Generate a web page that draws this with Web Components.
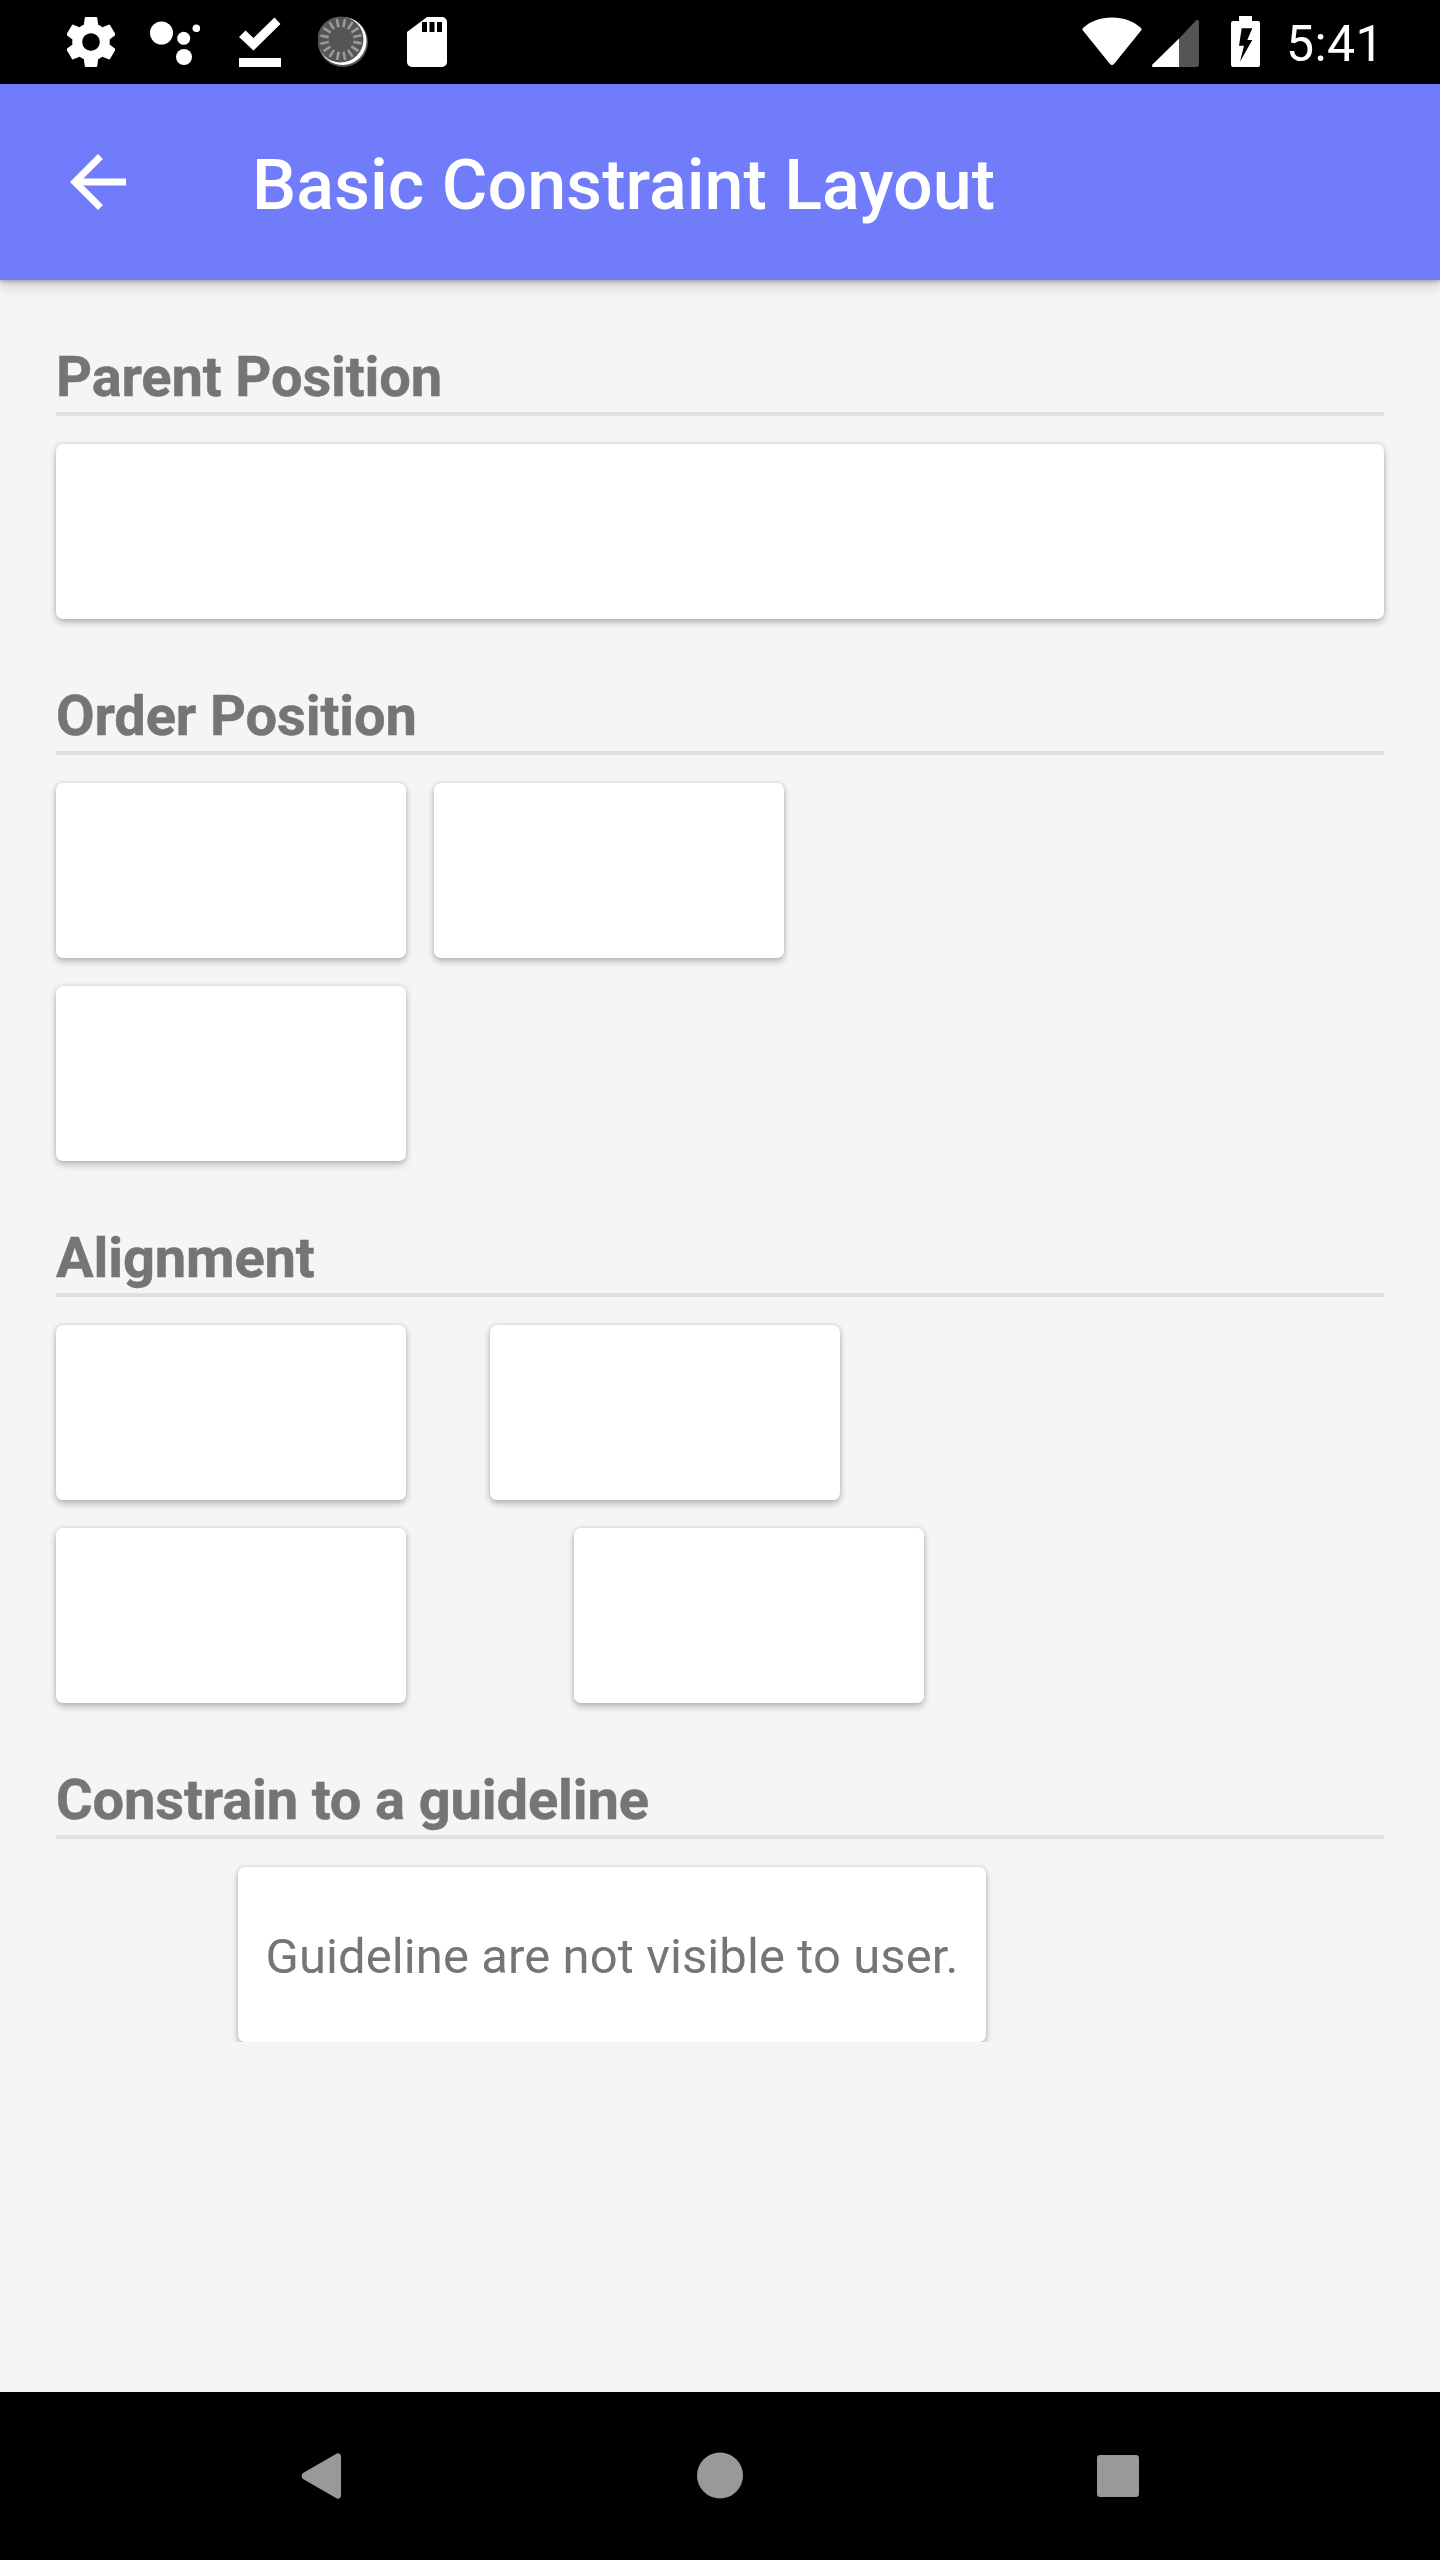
<!DOCTYPE html>
<html><head><meta charset="utf-8"><style>
html,body{margin:0;padding:0;background:#000}
body{width:1440px;height:2560px;overflow:hidden;font-family:Roboto,sans-serif}
</style></head><body>
<demo-app>
  <status-bar slot="status"></status-bar>
  <app-toolbar slot="toolbar">Basic Constraint Layout</app-toolbar>
  <layout-section heading="Parent Position">
    <card-row><demo-card wide></demo-card></card-row>
  </layout-section>
  <layout-section heading="Order Position">
    <card-row><demo-card></demo-card><demo-card style="margin-left:28px"></demo-card></card-row>
    <card-row><demo-card></demo-card></card-row>
  </layout-section>
  <layout-section heading="Alignment">
    <card-row><demo-card></demo-card><demo-card style="margin-left:84px"></demo-card></card-row>
    <card-row><demo-card></demo-card><demo-card style="margin-left:168px"></demo-card></card-row>
  </layout-section>
  <layout-section heading="Constrain to a guideline">
    <card-row><demo-card guide style="margin-left:182px">Guideline are not visible to user.</demo-card></card-row>
  </layout-section>
  <nav-bar slot="nav"></nav-bar>
</demo-app>
<script>
function def(name, html){
  customElements.define(name, class extends HTMLElement{
    constructor(){super();this.attachShadow({mode:'open'}).innerHTML=html;}
  });
}
def('demo-app',`<style>
:host{display:flex;flex-direction:column;width:1440px;height:2560px;background:#f5f5f5}
main{flex:1;display:flex;flex-direction:column;padding:0 56px;min-height:0;overflow:hidden}
</style><slot name="status"></slot><slot name="toolbar"></slot><main><slot></slot></main><slot name="nav"></slot>`);

const ticks=[...Array(16)].map((_,i)=>{const a=(i*22.5+11)*Math.PI/180;const c=[341,39.5];
 return `<line x1="${(c[0]+12.5*Math.cos(a)).toFixed(1)}" y1="${(c[1]+12.5*Math.sin(a)).toFixed(1)}" x2="${(c[0]+21*Math.cos(a)).toFixed(1)}" y2="${(c[1]+21*Math.sin(a)).toFixed(1)}"/>`}).join('');
def('status-bar',`<style>
:host{display:flex;flex:none;height:84px;background:#000;color:#fff;align-items:stretch;padding-left:67px;padding-right:63px;position:relative}
svg{display:block;height:84px;flex:none;fill:#fff}
.time{font:400 50px/88px Roboto,sans-serif;letter-spacing:.4px;margin-left:26px;width:91px;white-space:nowrap}
.sp{flex:1}
</style>
<svg width="48" viewBox="67 0 48 84"><path transform="translate(91 42) scale(2.5) translate(-12 -12)" d="M19.43 12.98c.04-.32.07-.64.07-.98s-.03-.66-.07-.98l2.11-1.65c.19-.15.24-.42.12-.64l-2-3.46c-.12-.22-.39-.3-.61-.22l-2.49 1c-.52-.4-1.08-.73-1.69-.98l-.38-2.65C14.46 2.18 14.25 2 14 2h-4c-.25 0-.46.18-.49.42l-.38 2.65c-.61.25-1.17.59-1.69.98l-2.49-1c-.23-.09-.49 0-.61.22l-2 3.46c-.13.22-.07.49.12.64l2.11 1.65c-.04.32-.07.65-.07.98s.03.66.07.98l-2.11 1.65c-.19.15-.24.42-.12.64l2 3.46c.12.22.39.3.61.22l2.49-1c.52.4 1.08.73 1.69.98l.38 2.65c.03.24.24.42.49.42h4c.25 0 .46-.18.49-.42l.38-2.65c.61-.25 1.17-.59 1.69-.98l2.49 1c.23.09.49 0 .61-.22l2-3.46c.12-.22.07-.49-.12-.64l-2.11-1.65zM12 15.5c-1.93 0-3.5-1.57-3.5-3.5s1.57-3.5 3.5-3.5 3.5 1.57 3.5 3.5-1.57 3.5-3.5 3.5z"/></svg>
<svg width="50" viewBox="150 0 50 84" style="margin-left:35px"><circle cx="161.5" cy="33" r="11.5"/><circle cx="183.7" cy="38.3" r="6.5"/><circle cx="196.3" cy="28.3" r="3.8"/><circle cx="184" cy="57" r="8"/></svg>
<svg width="42" viewBox="239 0 42 84" style="margin-left:39px"><path d="M239 58h42v9h-42zM239 37l6.500-6.500 8 7.500L274.500 17.500 280.500 24 253.500 50.500z"/></svg>
<svg width="50" viewBox="318 0 50 84" style="margin-left:37px"><circle cx="343" cy="42" r="25" fill="#555"/><circle cx="342.500" cy="41" r="24" fill="#fff"/><circle cx="340.500" cy="39.500" r="23" fill="#555"/><g stroke="#9a9a9a" stroke-width="2.600" fill="none">${ticks}</g></svg>
<svg width="40" viewBox="407 0 40 84" style="margin-left:39px"><path fill-rule="evenodd" d="M427 17h15a5 5 0 0 1 5 5v40a5 5 0 0 1-5 5h-30a5 5 0 0 1-5-5V32zM422 22v10h5V22zM429.500 22v10h5V22zM437 22v10h5V22z"/></svg>
<span class="sp"></span>
<svg width="60" viewBox="1082 0 60 84"><path d="M1112 17.500c11.500 0 22 4 29 10.500a1.800 1.800 0 0 1 .1 2.500L1114 64a2.600 2.600 0 0 1-4 0L1082.900 30.500a1.800 1.800 0 0 1 .1-2.500c7-6.500 17.500-10.500 29-10.500z"/></svg>
<svg width="47" viewBox="1152 0 47 84" style="margin-left:10px"><path fill="#555" d="M1179 38.500 1196 20.500c1.200-1 3-.3 3 1.300V64a3 3 0 0 1-3 3h-17z"/><path d="M1179 38.500V67h-25.500c-1.500 0-2-1.500-1-2.500z"/></svg>
<svg width="29" viewBox="1231 0 29 84" style="margin-left:32px"><path fill-rule="evenodd" d="M1239 16h13v5h6a2 2 0 0 1 2 2v42a2 2 0 0 1-2 2h-25a2 2 0 0 1-2-2V23a2 2 0 0 1 2-2h6zM1241.700 28.300h10.600l-5 11.700h5l-12.300 21.700 4-16h-5z"/></svg>
<span class="time">5:41</span>`);

def('app-toolbar',`<style>
:host{display:flex;flex:none;height:196px;background:#717cfb;align-items:center;color:#fff;box-shadow:0 2px 3px rgba(0,0,0,.18),0 5px 12px rgba(0,0,0,.2);position:relative;z-index:1;box-sizing:border-box;padding-left:56px}
svg{display:block;width:84px;height:84px;flex:none;fill:#fff}
span{font:500 70px/84px Roboto,sans-serif;margin-left:112px;padding-top:6px;white-space:nowrap}
</style><svg viewBox="0 0 24 24"><path d="M20 11H7.830l5.590-5.590L12 4l-8 8 8 8 1.410-1.410L7.830 13H20v-2z"/></svg><span><slot></slot></span>`);

customElements.define('layout-section',class extends HTMLElement{
 constructor(){super();this.attachShadow({mode:'open'}).innerHTML=`<style>
:host{display:block}
h2{margin:0;font:700 56px/66px Roboto,sans-serif;letter-spacing:-.13px;color:#757575;white-space:nowrap;padding:64px 0 2px;border-bottom:4px solid #e0e0e0;-webkit-text-stroke:.5px #757575}
.body{display:flex;flex-direction:column;padding-top:28px;gap:28px}
</style><h2></h2><div class="body"><slot></slot></div>`;}
 connectedCallback(){this.shadowRoot.querySelector('h2').textContent=this.getAttribute('heading');}
});
def('card-row',`<style>:host{display:flex;align-items:flex-start}</style><slot></slot>`);
def('demo-card',`<style>
:host{display:flex;align-items:center;justify-content:center;flex:none;width:350px;height:175px;box-sizing:border-box;background:#fff;border-radius:7px;box-shadow:0 4px 7px rgba(0,0,0,.22),0 0 5px rgba(0,0,0,.14);font:400 49px/1 Roboto,sans-serif;letter-spacing:.09px;color:#757575;white-space:nowrap}
:host([wide]){width:1328px}
:host([guide]){width:748px;padding-top:4px;clip-path:inset(-12px -12px 0 -12px)}
</style><slot></slot>`);
def('nav-bar',`<style>
:host{display:block;flex:none;height:168px;background:#000}
svg{display:block;width:1440px;height:168px}
</style><svg viewBox="0 2392 1440 168" fill="#999"><path d="M341 2456v40a3 3 0 0 1-5 2L303 2479a4 4 0 0 1 0-6L336 2454a3 3 0 0 1 5 2z"/><circle cx="720" cy="2475.500" r="23"/><rect x="1097" y="2455" width="42" height="42" rx="3"/></svg>`);
</script></body></html>
